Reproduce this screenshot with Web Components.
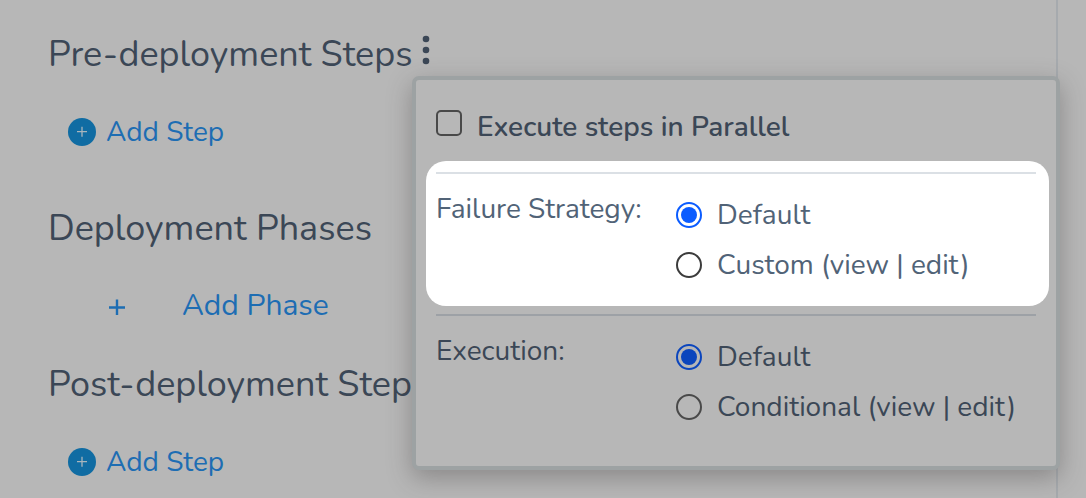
<!DOCTYPE html>
<html lang="en">
<head>
<meta charset="utf-8">
<meta name="viewport" content="width=device-width, initial-scale=1">
<title>Workflow deployment</title>
<style>
  body {
    margin: 0;
    background: #b7b7b7;
    color: #3b4756;
    font-family: Nunito, "Noto Sans", sans-serif;
    font-size: 28px;
  }
</style>
</head>
<body>
<workflow-page></workflow-page>

<script>
const define = (name, html) => customElements.define(name, class extends HTMLElement {
  constructor() {
    super();
    const template = document.createElement('template');
    template.innerHTML = html;
    this.attachShadow({ mode: 'open' }).append(template.content.cloneNode(true));
  }
});

define('section-heading', `
  <style>
    :host { display: flex; align-items: center; height: 50px; white-space: nowrap; }
    h2 { margin: 0; font-size: 36px; line-height: 50px; font-weight: 400; }
  </style>
  <h2><slot></slot></h2><slot name="action"></slot>`);

define('more-button', `
  <style>
    :host { display: block; height: 42px; }
    button { display: block; width: 26px; height: 32px; padding: 0; border: 0; background: none; color: #3b4756; }
    svg { display: block; }
  </style>
  <button type="button" aria-label="More options" aria-expanded="true">
    <svg width="26" height="32" viewBox="0 0 26 32" fill="currentColor">
      <circle cx="13" cy="5" r="3.3"/><circle cx="13" cy="16" r="3.3"/><circle cx="13" cy="27" r="3.3"/>
    </svg>
  </button>`);

define('add-button', `
  <style>
    :host { display: block; }
    button {
      display: flex; align-items: center; gap: 10px; height: 40px; padding: 0 0 0 20px;
      border: 0; background: none; color: #1d6db3; font: inherit; line-height: 38px; white-space: nowrap;
    }
    svg { display: block; }
    .plain { display: none; }
    :host([plain]) button { gap: 56px; padding-left: 60px; font-size: 30px; }
    :host([plain]) .plain { display: block; }
    :host([plain]) .round { display: none; }
  </style>
  <button type="button">
    <svg class="round" width="28" height="28" viewBox="0 0 28 28" aria-hidden="true">
      <circle cx="14" cy="14" r="14" fill="#106ca3"/>
      <path d="M9 13.7h10M14 8.7v10" stroke="#a9b5bc" stroke-width="1.3"/>
    </svg>
    <svg class="plain" width="18" height="18" viewBox="0 0 18 18" aria-hidden="true">
      <path d="M1 10.5h16M9 2.5v16" stroke="#1d6db3" stroke-width="2.4"/>
    </svg>
    <slot></slot>
  </button>`);

define('check-option', `
  <style>
    :host { display: flex; }
    label { display: flex; align-items: center; gap: 15px; line-height: 40px; font-weight: 600; white-space: nowrap; }
    input {
      appearance: none; box-sizing: border-box; flex: none; width: 26px; height: 26px; margin: 0 0 8px;
      border: 2px solid #494949; border-radius: 5px;
    }
    input:checked { background: #0b45bd; }
  </style>
  <label><input type="checkbox"><span><slot></slot></span></label>`);

define('choice-group', `
  <style>
    :host {
      --ink: #3b4756; --rule: #9da1a6; --ring: #494949; --accent: #0b45bd;
      display: block; padding: 0 13px 0 10px; color: var(--ink);
    }
    :host([highlighted]) {
      --ink: #516377; --rule: #dbe0e5; --ring: #3c3c3c; --accent: #0b5cff;
      padding: 11px 13px 16px 10px; background: #fff; border-radius: 20px;
    }
    .group { display: grid; grid-template-columns: 240px 1fr; padding-top: 16px; border-top: 2px solid var(--rule); }
    .title { line-height: 38px; white-space: nowrap; }
    label { display: flex; align-items: center; gap: 15px; height: 50px; white-space: nowrap; }
    input {
      appearance: none; box-sizing: border-box; display: grid; place-items: center; flex: none;
      width: 26px; height: 26px; margin: 0; border: 2px solid var(--ring); border-radius: 50%;
    }
    input:checked { border-color: var(--accent); }
    input:checked::before { content: ""; width: 16px; height: 16px; border-radius: 50%; background: var(--accent); }
  </style>
  <div class="group" role="radiogroup" aria-labelledby="title">
    <div class="title" id="title"><slot></slot></div>
    <div>
      <label><input type="radio" name="choice" checked><span>Default</span></label>
      <label><input type="radio" name="choice"><span><slot name="other"></slot></span></label>
    </div>
  </div>`);

define('options-menu', `
  <style>
    :host {
      display: flex; flex-direction: column; gap: 8px; box-sizing: border-box;
      padding: 27px 7px 34px 10px; border: 4px solid #9da2a3; border-radius: 7px;
      background: #b7b7b7; box-shadow: 0 8px 24px rgba(60, 56, 56, .36);
    }
    check-option { padding: 0 10px 6px; }
  </style>
  <check-option>Execute steps in Parallel</check-option>
  <choice-group highlighted>Failure Strategy:<span slot="other">Custom (view | edit)</span></choice-group>
  <choice-group>Execution:<span slot="other">Conditional (view | edit)</span></choice-group>`);

define('workflow-page', `
  <style>
    :host { display: block; }
    main {
      position: relative; box-sizing: border-box; min-height: 100vh; margin-right: 28px;
      padding: 30px 0 16px 48px; border-right: 2px solid #a6aaae;
      display: flex; flex-direction: column; gap: 34px;
    }
    section { display: flex; flex-direction: column; gap: 32px; }
    .first { padding-bottom: 18px; }
    options-menu { position: absolute; top: 76px; left: 412px; right: -4px; }
  </style>
  <main>
    <section class="first">
      <section-heading>Pre-deployment Steps<more-button slot="action"></more-button></section-heading>
      <add-button>Add Step</add-button>
    </section>
    <section>
      <section-heading>Deployment Phases</section-heading>
      <add-button plain>Add Phase</add-button>
    </section>
    <section>
      <section-heading>Post-deployment Steps</section-heading>
      <add-button>Add Step</add-button>
    </section>
    <options-menu></options-menu>
  </main>`);
</script>
</body>
</html>
